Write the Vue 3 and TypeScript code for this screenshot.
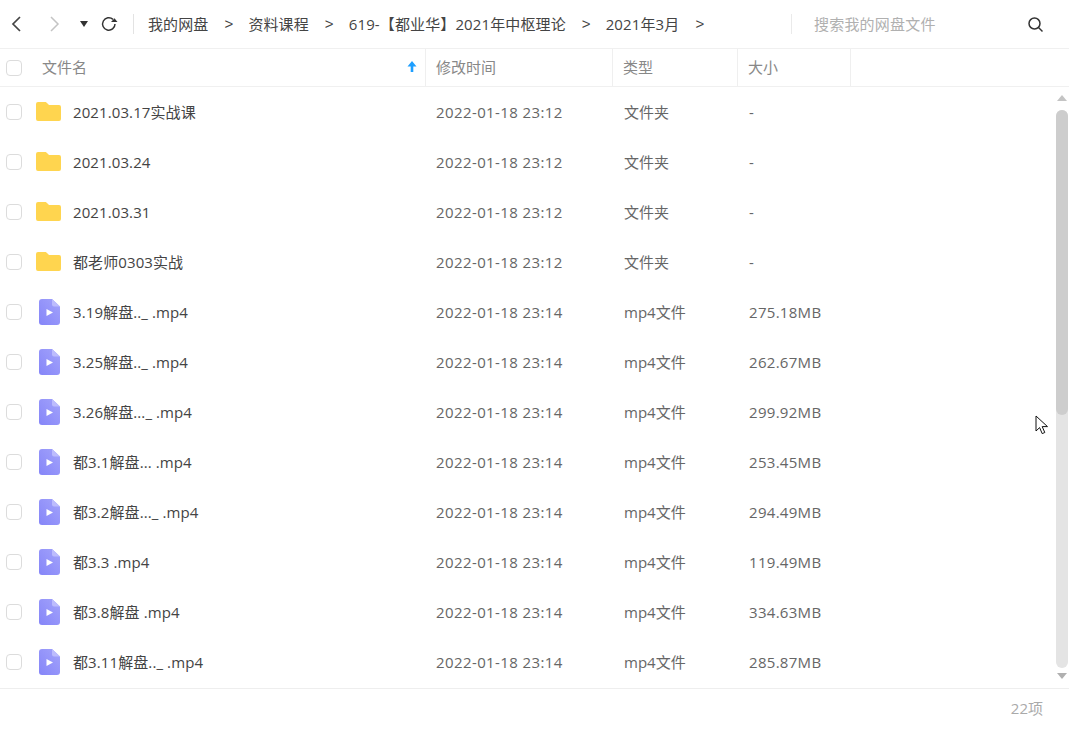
<script setup lang="ts">
interface FileRow {
  name: string
  time: string
  type: string
  size: string
  kind: 'folder' | 'video'
}

const crumbs = ['我的网盘', '资料课程', '619-【都业华】2021年中枢理论', '2021年3月']

const folders = ['2021.03.17实战课', '2021.03.24', '2021.03.31', '都老师0303实战']
const videos: [string, string][] = [
  ['3.19解盘.._ .mp4', '275.18MB'],
  ['3.25解盘.._ .mp4', '262.67MB'],
  ['3.26解盘..._ .mp4', '299.92MB'],
  ['都3.1解盘... .mp4', '253.45MB'],
  ['都3.2解盘..._ .mp4', '294.49MB'],
  ['都3.3 .mp4', '119.49MB'],
  ['都3.8解盘 .mp4', '334.63MB'],
  ['都3.11解盘.._ .mp4', '285.87MB'],
]

const rows: FileRow[] = [
  ...folders.map((name): FileRow => ({
    name,
    time: '2022-01-18 23:12',
    type: '文件夹',
    size: '-',
    kind: 'folder',
  })),
  ...videos.map(([name, size]): FileRow => ({
    name,
    time: '2022-01-18 23:14',
    type: 'mp4文件',
    size,
    kind: 'video',
  })),
]
</script>

<template>
  <div class="page">
    <header class="toolbar">
      <div class="nav">
        <svg class="nav-back" width="12" height="18" viewBox="0 0 12 18">
          <path d="M10 2 3 9l7 7" fill="none" stroke="#444" stroke-width="1.7" />
        </svg>
        <svg class="nav-forward" width="12" height="18" viewBox="0 0 12 18">
          <path d="M2 2l7 7-7 7" fill="none" stroke="#c4c4c4" stroke-width="1.5" />
        </svg>
        <svg class="nav-drop" width="8" height="6" viewBox="0 0 8 6">
          <path d="M0 0h8L4 6z" fill="#333" />
        </svg>
        <svg class="nav-refresh" width="18" height="18" viewBox="0 0 18 18">
          <path d="M15 9a6.200 6.200 0 1 1-2-4.600" fill="none" stroke="#333" stroke-width="1.500" />
          <path d="M11 7h6.500l-3-3.800z" fill="#333" />
        </svg>
      </div>
      <nav class="crumbs">
        <template v-for="crumb in crumbs" :key="crumb">
          <span class="crumb">{{ crumb }}</span>
          <span class="sep">&gt;</span>
        </template>
      </nav>
      <div class="search">
        <span class="search-text">搜索我的网盘文件</span>
        <svg class="search-icon" width="17" height="17" viewBox="0 0 17 17">
          <circle cx="7.500" cy="7.500" r="5.500" fill="none" stroke="#333" stroke-width="1.500" />
          <path d="M11.500 11.500l4 4" stroke="#333" stroke-width="1.500" />
        </svg>
      </div>
    </header>

    <div class="thead">
      <div class="th th-name">
        <span class="check"></span>
        <span class="th-label">文件名</span>
        <svg class="sort" width="10" height="11" viewBox="0 0 10 11">
          <path d="M5 0l4.500 5.500H6.300V11H3.700V5.500H.5z" fill="#1e9fff" />
        </svg>
      </div>
      <div class="th th-time"><span class="th-text">修改时间</span></div>
      <div class="th th-type"><span class="th-text">类型</span></div>
      <div class="th th-size"><span class="th-text">大小</span></div>
    </div>

    <main class="body">
      <div class="list">
        <div v-for="row in rows" :key="row.name" class="row">
          <div class="cell-name">
            <span class="check"></span>
            <span class="icon">
              <svg v-if="row.kind === 'folder'" class="folder" width="25" height="19" viewBox="0 0 25 19">
                <path
                  d="M0 2a2 2 0 0 1 2-2h7c1 0 1.500.5 2 1l2 2h10a2 2 0 0 1 2 2v12a2 2 0 0 1-2 2H2a2 2 0 0 1-2-2z"
                  fill="#ffd54f"
                />
              </svg>
              <svg v-else width="21" height="26" viewBox="0 0 21 26">
                <defs>
                  <linearGradient id="video-fill" x1="1" y1="0" x2="0" y2="1">
                    <stop offset="0" stop-color="#a3a3fb" />
                    <stop offset="1" stop-color="#8585f8" />
                  </linearGradient>
                </defs>
                <path
                  d="M3 0h10l8 7.500V23a3 3 0 0 1-3 3H3a3 3 0 0 1-3-3V3a3 3 0 0 1 3-3z"
                  fill="url(#video-fill)"
                />
                <path d="M13 0l8 7.500h-6a2 2 0 0 1-2-2z" fill="#bcbcfd" />
                <path d="M7.500 10l6.500 3.500-6.500 3.500z" fill="#fff" />
              </svg>
            </span>
            <span class="name">{{ row.name }}</span>
          </div>
          <div class="cell-time">{{ row.time }}</div>
          <div class="cell-type">{{ row.type }}</div>
          <div class="cell-size">{{ row.size }}</div>
        </div>
      </div>
      <div class="scrollbar">
        <span class="arrow-up"></span>
        <div class="track">
          <div class="thumb"></div>
        </div>
        <span class="arrow-down"></span>
      </div>
      <svg class="cursor" width="14" height="21" viewBox="0 0 14 21">
        <path
          d="M1 1v15l3.600-3.400 2.600 6 2.600-1.100-2.600-5.900H12.500z"
          fill="#fff"
          stroke="#111"
          stroke-width="1"
        />
      </svg>
    </main>

    <footer class="footer"><span class="footer-text">22项</span></footer>
  </div>
</template>

<style scoped>
.page {
  width: 1069px;
  height: 729px;
  display: flex;
  flex-direction: column;
  background: #fff;
  font-family: "Open Sans", "Noto Sans CJK SC", sans-serif;
  font-size: 15px;
  line-height: 20px;
  color: #424e67;
  overflow: hidden;
}

.toolbar {
  height: 48px;
  flex: none;
  display: flex;
  align-items: center;
  border-bottom: 1px solid #f0f0f0;
}

.nav {
  width: 134px;
  height: 20px;
  flex: none;
  display: flex;
  align-items: center;
  border-right: 1px solid #e3e3e3;
  box-sizing: border-box;
  padding-left: 10px;
}

.nav-forward {
  margin-left: 27px;
}

.nav-drop {
  margin-left: 19px;
}

.nav-refresh {
  margin-left: 12px;
}

.crumbs {
  flex: 1;
  display: flex;
  align-items: center;
  padding-left: 14px;
  color: #444;
  letter-spacing: 0.12px;
}

.crumb {
  white-space: nowrap;
}

.sep {
  margin: 0 15px 0 16px;
  font-family: "Liberation Sans", sans-serif;
}

.search {
  width: 278px;
  height: 20px;
  flex: none;
  display: flex;
  align-items: center;
  justify-content: space-between;
  box-sizing: border-box;
  border-left: 1px solid #eaeaea;
  padding: 0 25px 0 22px;
}

.search-text {
  color: #b0b0b0;
  letter-spacing: 0.2px;
}

.thead {
  height: 38px;
  flex: none;
  display: flex;
  border-bottom: 1px solid #f0f0f0;
  color: #888;
  box-sizing: border-box;
}

.th {
  display: flex;
  align-items: center;
  box-sizing: border-box;
  border-right: 1px solid #efefef;
  padding-left: 10px;
}

.th-name {
  width: 426px;
  padding-left: 6px;
}

.th-label {
  margin: 0 0 2px 20px;
  flex: 1;
}

.th-text {
  margin-bottom: 2px;
}

.sort {
  margin: 0 8px 2px 0;
}

.th-time {
  width: 187px;
}

.th-type {
  width: 125px;
}

.th-size {
  width: 113px;
}

.check {
  width: 16px;
  height: 16px;
  flex: none;
  box-sizing: border-box;
  border: 1px solid #dcdcdc;
  border-radius: 4px;
}

.body {
  flex: 1;
  min-height: 0;
  display: flex;
  position: relative;
}

.list {
  flex: 1;
  min-width: 0;
}

.row {
  height: 50px;
  display: flex;
  align-items: center;
  color: #666;
}

.cell-name {
  width: 436px;
  flex: none;
  display: flex;
  align-items: center;
  padding-left: 6px;
  box-sizing: border-box;
}

.icon {
  width: 26px;
  margin-left: 14px;
  display: flex;
  justify-content: center;
}

.folder {
  margin: 0 1px 1px 0;
}

.name {
  margin-left: 11px;
  color: #444;
  letter-spacing: 0.1px;
}

.cell-time {
  width: 188px;
  flex: none;
  letter-spacing: 0.4px;
}

.cell-type {
  width: 125px;
  flex: none;
}

.cell-size {
  letter-spacing: 0.3px;
}

.scrollbar {
  width: 13px;
  flex: none;
  display: flex;
  flex-direction: column;
  align-items: center;
  padding: 8px 1px 9px 0;
  box-sizing: border-box;
}

.arrow-up,
.arrow-down {
  width: 0;
  height: 0;
  flex: none;
  border-left: 5px solid transparent;
  border-right: 5px solid transparent;
}

.arrow-up {
  border-bottom: 6px solid #c4c4c4;
}

.arrow-down {
  border-top: 6px solid #b0b0b0;
}

.track {
  flex: 1;
  width: 12px;
  margin: 9px 0 5px;
  border-radius: 6px;
  background: #e4e4e4;
}

.thumb {
  height: 305px;
  border-radius: 6px;
  background: #cdcdcd;
}

.cursor {
  position: absolute;
  left: 1035px;
  top: 328px;
}

.footer {
  height: 41px;
  flex: none;
  display: flex;
  align-items: center;
  justify-content: flex-end;
  box-sizing: border-box;
  border-top: 1px solid #eee;
  padding-right: 26px;
  color: #aaa;
}

.footer-text {
  margin-bottom: 2px;
}
</style>

<style>
html,
body {
  margin: 0;
  background: #fff;
}
</style>
